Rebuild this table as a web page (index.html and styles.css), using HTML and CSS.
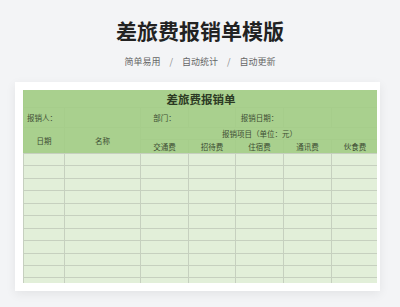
FILE: index.html
```html
<!DOCTYPE html>
<html lang="zh-CN">
<head>
<meta charset="utf-8">
<title>差旅费报销单模版</title>
<link rel="stylesheet" href="styles.css">
</head>
<body>
<div class="page">
  <h1 class="title">差旅费报销单模版</h1>
  <div class="tags">
    <span>简单易用</span><span class="sep">/</span><span>自动统计</span><span class="sep">/</span><span>自动更新</span>
  </div>
  <div class="card">
    <div class="sheet">
      <div class="head">
        <div class="c sheet-title">差旅费报销单</div>
        <div class="c left r2c1">报销人：</div>
        <div class="c r2c2"></div>
        <div class="c r2c3">部门：</div>
        <div class="c r2c4"></div>
        <div class="c r2c5">报销日期：</div>
        <div class="c r2c6"></div>
        <div class="c r2c7"></div>
        <div class="c date">日期</div>
        <div class="c name">名称</div>
        <div class="c items">报销项目（单位：元）</div>
        <div class="c low">交通费</div>
        <div class="c low">招待费</div>
        <div class="c low">住宿费</div>
        <div class="c low">通讯费</div>
        <div class="c low">伙食费</div>
      </div>
      <div class="body">
        <div></div><div></div><div></div><div></div><div></div><div></div><div></div>
        <div></div><div></div><div></div><div></div><div></div><div></div><div></div>
        <div></div><div></div><div></div><div></div><div></div><div></div><div></div>
        <div></div><div></div><div></div><div></div><div></div><div></div><div></div>
        <div></div><div></div><div></div><div></div><div></div><div></div><div></div>
        <div></div><div></div><div></div><div></div><div></div><div></div><div></div>
        <div></div><div></div><div></div><div></div><div></div><div></div><div></div>
        <div></div><div></div><div></div><div></div><div></div><div></div><div></div>
        <div></div><div></div><div></div><div></div><div></div><div></div><div></div>
        <div></div><div></div><div></div><div></div><div></div><div></div><div></div>
        <div></div><div></div><div></div><div></div><div></div><div></div><div></div>
      </div>
    </div>
  </div>
</div>
</body>
</html>
```
FILE: styles.css
```css
* { box-sizing: border-box; }
html, body { margin: 0; padding: 0; }
body {
  background: #f3f4f6;
  font-family: "Noto Sans CJK SC", "Noto Sans", sans-serif;
  width: 400px;
  height: 307px;
  overflow: hidden;
}
.page {
  display: flex;
  flex-direction: column;
  align-items: center;
  padding-top: 18px;
}
.title {
  margin: 0;
  font-size: 21px;
  line-height: 24px;
  font-weight: 700;
  color: #222;
  letter-spacing: 0;
}
.tags {
  margin-top: 14px;
  height: 12px;
  display: flex;
  align-items: center;
  font-size: 9px;
  line-height: 12px;
  color: #666;
}
.tags .sep {
  margin: 0 9px;
  color: #888;
}
.card {
  margin-top: 14px;
  align-self: flex-start;
  margin-left: 15px;
  width: 365px;
  height: 209px;
  background: #fff;
  padding: 8px 3px 8px 8px;
  box-shadow: 0 3px 10px rgba(0, 0, 0, 0.07);
}
.sheet {
  width: 354px;
  height: 193px;
  overflow: hidden;
  background: #c3ceba;
  font-size: 7.5px;
  color: #3d4d33;
}
.head {
  display: grid;
  grid-template-columns: 40px 75px 47px 46px 47px 47px 46px;
  grid-template-rows: 17px 19px 11px 13px;
  gap: 1px;
  background: #a6cd8b;
  padding-bottom: 1px;
  border-left: 1px solid #a6cd8b;
}
.head .c {
  background: #a9d08e;
  display: flex;
  align-items: center;
  justify-content: center;
  white-space: nowrap;
  line-height: 1;
}
.head .sheet-title {
  grid-column: 1 / 8;
  font-size: 11.5px;
  font-weight: 700;
  color: #2c3a24;
  padding-top: 2px;
}
.head .left {
  justify-content: flex-start;
  padding-left: 3px;
}
.head .date { grid-column: 1; grid-row: 3 / 5; }
.head .name { grid-column: 2; grid-row: 3 / 5; }
.head .items { grid-column: 3 / 8; grid-row: 3; padding-top: 1px; }
.head .low { grid-row: 4; }
.body {
  display: grid;
  grid-template-columns: 40px 75px 47px 46px 47px 47px 46px;
  grid-auto-rows: 11.45px;
  gap: 1px;
  padding-top: 1px;
  background: #c6d0bf;
  border-left: 1px solid #c6d0bf;
  margin-top: -1px;
}
.body div {
  background: #e2efd9;
}
```
